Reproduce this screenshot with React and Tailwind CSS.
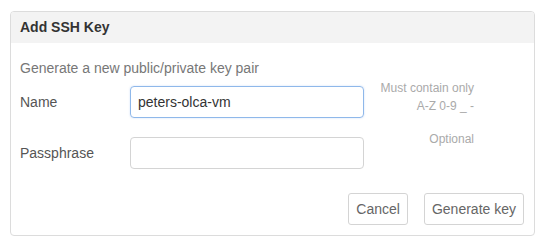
import React, { useState } from "react";

export default function App() {
  const [name, setName] = useState("peters-olca-vm");
  const [pass, setPass] = useState("");

  return (
    <div className="w-[544px] h-[250px] bg-white pt-[11px] pl-[10px]" style={{ fontFamily: '"Liberation Sans", Arial, sans-serif' }}>
      <div className="w-[525px] h-[225px] border border-[#dcdcdc] rounded-[4px] overflow-hidden flex flex-col">
        <div className="h-[31px] bg-[#f3f3f3] flex items-center px-[9px] text-[14px] font-bold text-[#333]">
          Add SSH Key
        </div>

        <div className="flex flex-col px-[9px] pt-[17px]">
          <p className="text-[14px] leading-[16px] text-[#777]">Generate a new public/private key pair</p>

          <Row label="Name" className="mt-[10px]" hint={<><div>Must contain only</div><div>A-Z 0-9 _ -</div></>}>
            <input
              value={name}
              onChange={(e) => setName(e.target.value)}
              className="w-[234px] h-[32px] border border-[#8fb8ea] rounded-[4px] px-[7px] text-[14px] text-[#333] outline-none shadow-[0_0_2px_rgba(102,153,230,0.35)]"
            />
          </Row>

          <Row label="Passphrase" className="mt-[19px]" hint={<div>Optional</div>}>
            <input
              type="password"
              value={pass}
              onChange={(e) => setPass(e.target.value)}
              className="w-[234px] h-[32px] border border-[#d4d4d4] rounded-[4px] px-[7px] text-[14px] text-[#333] outline-none"
            />
          </Row>

          <div className="flex justify-end gap-[16px] mt-[24px] pr-[1px]">
            <button className="h-[32px] px-[7px] border border-[#d4d4d4] rounded-[3px] bg-white text-[14px] text-[#666]">Cancel</button>
            <button className="h-[32px] px-[7px] border border-[#d4d4d4] rounded-[3px] bg-white text-[14px] text-[#666]">Generate key</button>
          </div>
        </div>
      </div>
    </div>
  );
}

function Row({ label, hint, children, className = "" }) {
  return (
    <div className={"flex items-start " + className}>
      <label className="w-[110px] h-[32px] flex items-center text-[14px] text-[#555]">{label}</label>
      {children}
      <div className="ml-[16px] w-[94px] -mt-[7px] text-right text-[12px] leading-[18px] text-[#aaa]">{hint}</div>
    </div>
  );
}
